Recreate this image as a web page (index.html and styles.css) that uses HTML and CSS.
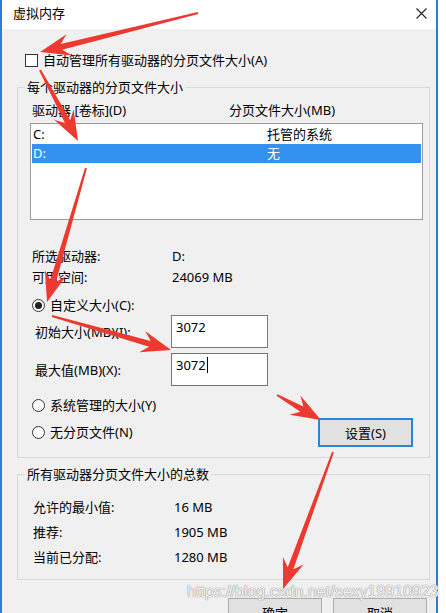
FILE: index.html
```html
<!DOCTYPE html>
<html lang="zh-CN">
<head>
<meta charset="utf-8">
<title>虚拟内存</title>
<link rel="stylesheet" href="styles.css">
</head>
<body>
<div class="page">
  <div class="window">
    <div class="titlebar">
      <span class="title">虚拟内存</span>
      <svg class="close" width="11" height="11" viewBox="0 0 11 11"><path d="M0.5,0.5 L10.5,10.5 M10.5,0.5 L0.5,10.5" stroke="#222" stroke-width="1.1" fill="none"/></svg>
    </div>
    <div class="client">
      <div class="check-row"><span class="checkbox"></span><span>自动管理所有驱动器的分页文件大小(A)</span></div>

      <fieldset class="group group-drives">
        <legend>每个驱动器的分页文件大小</legend>
        <div class="gbody gbody-drives">
          <div class="list-head"><span class="hcol1">驱动器 [卷标](D)</span><span>分页文件大小(MB)</span></div>
          <div class="listbox">
            <div class="item"><span class="icol1">C:</span><span>托管的系统</span></div>
            <div class="item selected"><span class="icol1">D:</span><span>无</span></div>
          </div>
          <div class="info info-first"><span class="k">所选驱动器:</span><span>D:</span></div>
          <div class="info"><span class="k">可用空间:</span><span>24069 MB</span></div>
          <div class="radio-row r-custom"><span class="radio on"></span><span>自定义大小(C):</span></div>
          <div class="field"><span class="fl">初始大小(MB)(I):</span><span class="input">3072</span></div>
          <div class="field field-2"><span class="fl">最大值(MB)(X):</span><span class="input focus">3072<span class="caret"></span></span></div>
          <div class="radio-row r-sys"><span class="radio"></span><span>系统管理的大小(Y)</span></div>
          <div class="last-row">
            <div class="radio-row"><span class="radio"></span><span>无分页文件(N)</span></div>
            <button class="btn btn-set" type="button">设置(S)</button>
          </div>
        </div>
      </fieldset>

      <fieldset class="group group-total">
        <legend>所有驱动器分页文件大小的总数</legend>
        <div class="gbody gbody-total">
          <div class="trow"><span class="tk">允许的最小值:</span><span>16 MB</span></div>
          <div class="trow"><span class="tk">推荐:</span><span>1905 MB</span></div>
          <div class="trow"><span class="tk">当前已分配:</span><span>1280 MB</span></div>
        </div>
      </fieldset>

      <div class="buttons">
        <button class="btn btn-dlg" type="button">确定</button>
        <button class="btn btn-dlg" type="button">取消</button>
      </div>
    </div>
  </div>

  <div class="watermark">https://blog.csdn.net/sexy19910923</div>

  <svg class="arrows" width="446" height="613" viewBox="0 0 446 613">
    <g fill="#ec3a31">
      <path transform="translate(198,13) rotate(166.1)" d="M0,-1 L140.7,-3 L132.7,-11 L162.7,0 L132.7,11 L140.7,3 L0,1Z"/>
      <path transform="translate(40,70) rotate(61.8)" d="M0,-1 L58.5,-3 L50.5,-11 L80.5,0 L50.5,11 L58.5,3 L0,1Z"/>
      <path transform="translate(86,168) rotate(106.2)" d="M0,-1 L117.6,-3 L109.6,-11 L139.6,0 L109.6,11 L117.6,3 L0,1Z"/>
      <path transform="translate(52,316) rotate(15.9)" d="M0,-1 L101.8,-3 L93.8,-11 L123.8,0 L93.8,11 L101.8,3 L0,1Z"/>
      <path transform="translate(277,395) rotate(29.6)" d="M0,-1 L28.6,-3 L20.6,-11 L50.6,0 L20.6,11 L28.6,3 L0,1Z"/>
      <path transform="translate(333,452) rotate(110.05)" d="M0,-1 L123.8,-3 L115.8,-11 L145.8,0 L115.8,11 L123.8,3 L0,1Z"/>
    </g>
  </svg>
</div>
</body>
</html>
```

FILE: styles.css
```css
* { box-sizing: border-box; }
html, body { margin: 0; padding: 0; }
body {
  font-family: "Noto Sans", "Noto Sans CJK SC", sans-serif;
  font-size: 13px;
  color: #000;
  background: #fff;
}
.page {
  position: relative;
  width: 446px;
  height: 613px;
  overflow: hidden;
  background: #fff;
}
.window {
  width: 438px;
  height: 613px;
  border-left: 2px solid #2d7dd2;
  border-right: 2px solid #2d7dd2;
  display: flex;
  flex-direction: column;
}
.titlebar {
  height: 29px;
  flex: none;
  background: #fff;
  display: flex;
  align-items: flex-start;
  padding: 5px 9px 0 11px;
  line-height: 16px;
}
.close {
  margin-left: auto;
  margin-top: 3px;
  display: block;
}
.client {
  flex: 1;
  background: #f0f0f0;
  padding-left: 15px;
  display: flex;
  flex-direction: column;
  align-items: flex-start;
}
.check-row {
  margin-top: 23px;
  height: 16px;
  line-height: 16px;
  padding-left: 8px;
  display: flex;
  align-items: center;
  gap: 5px;
}
.checkbox {
  width: 13px;
  height: 13px;
  border: 1px solid #333;
  background: #fff;
  display: block;
}
.group {
  margin: 0;
  padding: 0;
  border: 1px solid #d9d9d9;
  width: 413px;
  min-width: 0;
}
.group legend {
  margin-left: 7px;
  padding: 0 2px;
  line-height: 16px;
}
.group-drives { margin-top: 11px; }
.group-total { margin-top: 8px; }
.gbody-drives {
  padding-bottom: 10px;
  display: flex;
  flex-direction: column;
  align-items: flex-start;
}
.list-head {
  margin-top: 7px;
  height: 16px;
  line-height: 16px;
  display: flex;
}
.hcol1 {
  width: 211px;
  padding-left: 14px;
}
.listbox {
  margin-top: 5px;
  margin-left: 12px;
  width: 393px;
  height: 97px;
  border: 1px solid #9a9a9a;
  background: #fff;
  padding: 1px;
}
.item {
  height: 19px;
  line-height: 19px;
  padding-left: 1px;
  display: flex;
}
.icol1 { width: 234px; }
.item.selected {
  background: #3391ef;
  color: #fff;
}
.info {
  height: 21px;
  line-height: 21px;
  display: flex;
}
.info-first { margin-top: 26px; }
.k {
  width: 154px;
  padding-left: 14px;
}
.radio-row {
  display: flex;
  align-items: center;
  gap: 5px;
  padding-left: 14px;
  line-height: 19px;
}
.r-custom { margin-top: 8px; height: 19px; }
.r-sys { margin-top: 9px; height: 20px; }
.radio {
  width: 13px;
  height: 13px;
  border: 1px solid #333;
  border-radius: 50%;
  background: #fff;
  display: flex;
  align-items: center;
  justify-content: center;
}
.radio.on::after {
  content: "";
  width: 7px;
  height: 7px;
  border-radius: 50%;
  background: #222;
}
.field {
  height: 33px;
  display: flex;
  align-items: center;
}
.field-2 { margin-top: 5px; }
.fl {
  width: 153px;
  padding-left: 17px;
}
.input {
  width: 97px;
  height: 33px;
  align-self: flex-start;
  border: 1px solid #7a7a7a;
  background: #fff;
  padding: 3px 4px;
  line-height: 16px;
  display: flex;
  align-items: flex-start;
}
.input.focus { border-color: #2b84d6; }
.caret {
  display: block;
  width: 1px;
  height: 16px;
  background: #000;
  margin-left: 1px;
}
.last-row {
  margin-top: 3px;
  height: 29px;
  width: 411px;
  display: flex;
  align-items: center;
  justify-content: space-between;
  padding-right: 16px;
}
.btn {
  font: inherit;
  color: #000;
  background: #e1e1e1;
  border: 1px solid #adadad;
  padding: 0;
  margin: 0;
  line-height: 16px;
}
.btn-set {
  width: 95px;
  height: 29px;
  border: 2px solid #2b84d6;
}
.gbody-total {
  padding-top: 13px;
  padding-bottom: 9px;
}
.trow {
  height: 25px;
  line-height: 25px;
  display: flex;
}
.tk {
  width: 156px;
  padding-left: 15px;
}
.buttons {
  margin-top: 18px;
  margin-left: 211px;
  display: flex;
  gap: 11px;
}
.btn-dlg {
  width: 94px;
  height: 29px;
}
.watermark {
  position: absolute;
  left: 187px;
  top: 583px;
  font-family: "Liberation Sans", Arial, sans-serif;
  font-size: 16px;
  line-height: 18px;
  color: rgba(255, 255, 255, 0.9);
  text-shadow: 0 0 1px #8a8a8a, 0 0 1px #8a8a8a;
  white-space: nowrap;
}
.arrows {
  position: absolute;
  left: 0;
  top: 0;
  pointer-events: none;
}
```
